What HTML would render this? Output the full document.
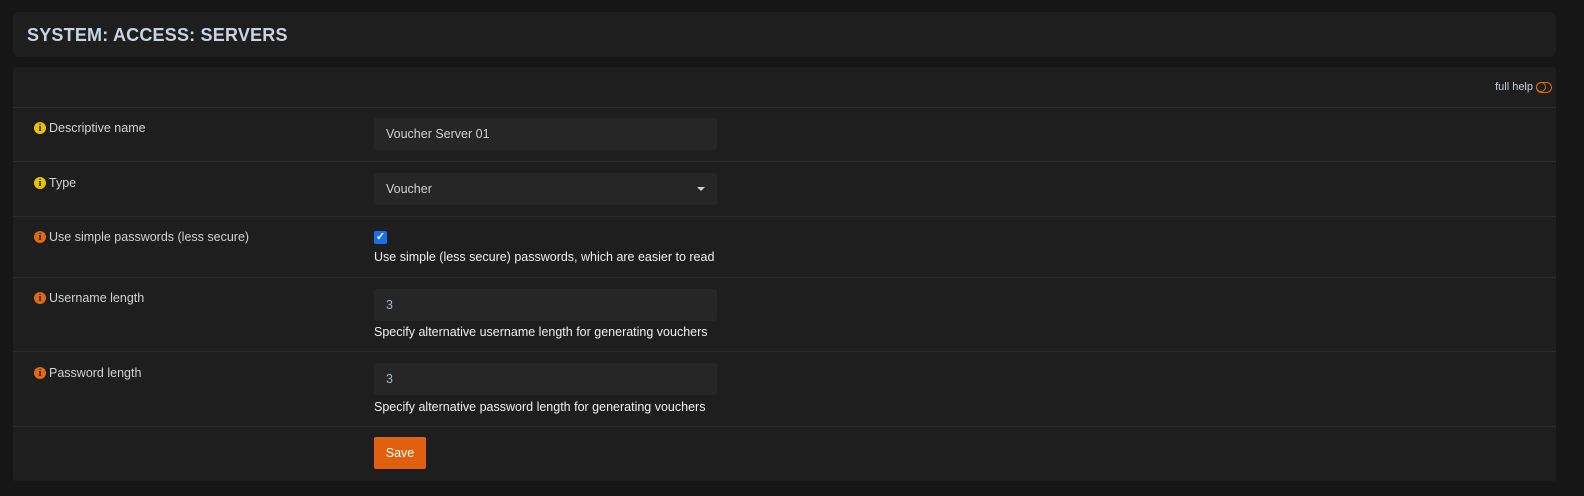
<!DOCTYPE html>
<html><head><style>
*{box-sizing:border-box}
body{margin:0;width:1584px;height:496px;background:#161616;font-family:"Liberation Sans",sans-serif;font-size:12.5px;color:#d2d2d2;position:relative;overflow:hidden}
.hdr{position:absolute;left:13px;top:12px;width:1543px;height:45px;background:#1e1e1e;border-radius:6px}
.hdr h1{margin:0;position:absolute;left:14px;top:13px;font-size:18px;font-weight:bold;color:#c9d4e0;letter-spacing:0.2px}
.pn{position:absolute;left:13px;top:67px;width:1543px;height:414px;background:#1e1e1e;border-radius:3px}
.ln{position:absolute;left:0;width:100%;height:1px;background:#2a2a2a}
.lb{position:absolute;left:21px;display:flex;align-items:center;gap:3px}
.ic{width:12px;height:12px;border-radius:50%;display:inline-flex;align-items:center;justify-content:center;color:#1e1e1e;font-weight:bold;font-size:10px;font-family:"Liberation Serif",serif}
.y{background:#e8c400}.o{background:#e06a10}
.inp{position:absolute;left:361px;width:343px;height:32px;background:#262626;border-radius:3px;padding:9px 12px;color:#d0d0d0}
.num{color:#9fb6cc}
.hl{position:absolute;left:361px;color:#f0f0f0}
</style></head><body>
<div class="hdr"><h1>SYSTEM: ACCESS: SERVERS</h1></div>
<div class="pn">
<div style="position:absolute;right:23px;top:14px;font-size:11px;color:#c8d2dc">full help</div>
<div style="position:absolute;right:4px;top:15px;width:16px;height:11px;border:1.5px solid #e06a10;border-radius:6px"><div style="position:absolute;left:-1px;top:-1px;width:10px;height:10px;border:1.5px solid #e06a10;border-radius:50%"></div></div>
<div class="ln" style="top:40px"></div>
<div class="lb" style="top:54px"><span class="ic y">i</span>Descriptive name</div>
<div class="inp" style="top:51px">Voucher Server 01</div>
<div class="ln" style="top:94px"></div>
<div class="lb" style="top:109px"><span class="ic y">i</span>Type</div>
<div class="inp" style="top:106px">Voucher<span style="position:absolute;right:12px;top:14px;border:4px solid transparent;border-top:4px solid #ccc;border-bottom:0"></span></div>
<div class="ln" style="top:149px"></div>
<div class="lb" style="top:163px"><span class="ic o">i</span>Use simple passwords (less secure)</div>
<div style="position:absolute;left:361px;top:164px;width:13px;height:13px;background:#1a6ee8;border-radius:2px;color:#fff;font-size:11px;line-height:13px;text-align:center;font-weight:bold">✓</div>
<div class="hl" style="top:183px">Use simple (less secure) passwords, which are easier to read</div>
<div class="ln" style="top:210px"></div>
<div class="lb" style="top:224px"><span class="ic o">i</span>Username length</div>
<div class="inp num" style="top:222px">3</div>
<div class="hl" style="top:258px">Specify alternative username length for generating vouchers</div>
<div class="ln" style="top:284px"></div>
<div class="lb" style="top:299px"><span class="ic o">i</span>Password length</div>
<div class="inp num" style="top:296px">3</div>
<div class="hl" style="top:333px">Specify alternative password length for generating vouchers</div>
<div class="ln" style="top:359px"></div>
<div style="position:absolute;left:361px;top:370px;width:52px;height:32px;background:#e0600f;border-radius:2px;color:#fff;text-align:center;line-height:32px">Save</div>
</div>
</body></html>
